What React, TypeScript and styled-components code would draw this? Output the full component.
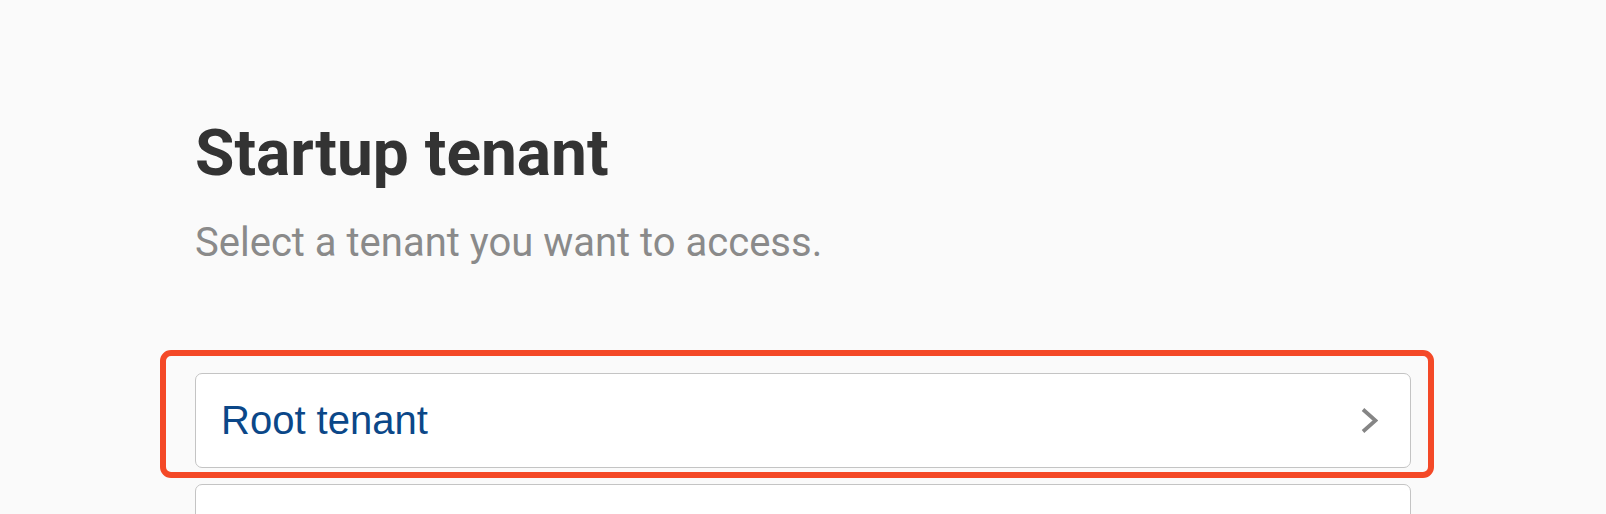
import React from "react";
import styled, { createGlobalStyle } from "styled-components";

const GlobalStyle = createGlobalStyle`
  html, body {
    margin: 0;
    padding: 0;
    background: #fafafa;
  }
  body {
    font-family: Roboto, "Liberation Sans", Arial, sans-serif;
    overflow: hidden;
  }
`;

const Page = styled.main`
  min-height: 514px;
  background: #fafafa;
  display: flex;
  justify-content: center;
  padding-top: 122px;
  box-sizing: border-box;
`;

const Column = styled.section`
  width: 1216px;
  display: flex;
  flex-direction: column;
`;

const Title = styled.h1`
  margin: 0 0 37px 0;
  font-family: Roboto, sans-serif;
  font-weight: 700;
  font-size: 64px;
  line-height: 64px;
  color: #333333;
`;

const Subtitle = styled.p`
  margin: 0 0 110px 0;
  font-family: Roboto, sans-serif;
  font-weight: 400;
  font-size: 40px;
  line-height: 40px;
  color: #8a8a8a;
`;

const List = styled.div`
  display: flex;
  flex-direction: column;
  gap: 16px;
`;

const ItemWrap = styled.div`
  position: relative;
`;

const Card = styled.button`
  width: 100%;
  height: 95px;
  box-sizing: border-box;
  display: flex;
  align-items: center;
  justify-content: space-between;
  padding: 0 32px 0 25px;
  background: #ffffff;
  border: 1.5px solid #c4c4c4;
  border-radius: 7px;
  cursor: pointer;
  text-align: left;
`;

const CardLabel = styled.span`
  font-family: "Liberation Sans", Arial, sans-serif;
  font-size: 40px;
  color: #0b4788;
`;

const Highlight = styled.div`
  position: absolute;
  left: -35px;
  top: -23px;
  right: -23px;
  bottom: -10px;
  border: 6px solid #f44927;
  border-radius: 11px;
  pointer-events: none;
`;

const Chevron = () => (
  <svg width="17" height="27" viewBox="0 0 17 27" fill="none">
    <polyline
      points="2,2.5 14.5,13.5 2,24.5"
      stroke="#858585"
      strokeWidth="3.8"
      strokeLinecap="butt"
      strokeLinejoin="miter"
      fill="none"
    />
  </svg>
);

type Tenant = { id: string; name: string; highlighted?: boolean };

const tenants: Tenant[] = [
  { id: "root", name: "Root tenant", highlighted: true },
  { id: "next", name: "" },
];

export default function App() {
  return (
    <>
      <GlobalStyle />
      <Page>
        <Column>
          <Title>Startup tenant</Title>
          <Subtitle>Select a tenant you want to access.</Subtitle>
          <List>
            {tenants.map((t) => (
              <ItemWrap key={t.id}>
                <Card>
                  <CardLabel>{t.name}</CardLabel>
                  <Chevron />
                </Card>
                {t.highlighted && <Highlight />}
              </ItemWrap>
            ))}
          </List>
        </Column>
      </Page>
    </>
  );
}
